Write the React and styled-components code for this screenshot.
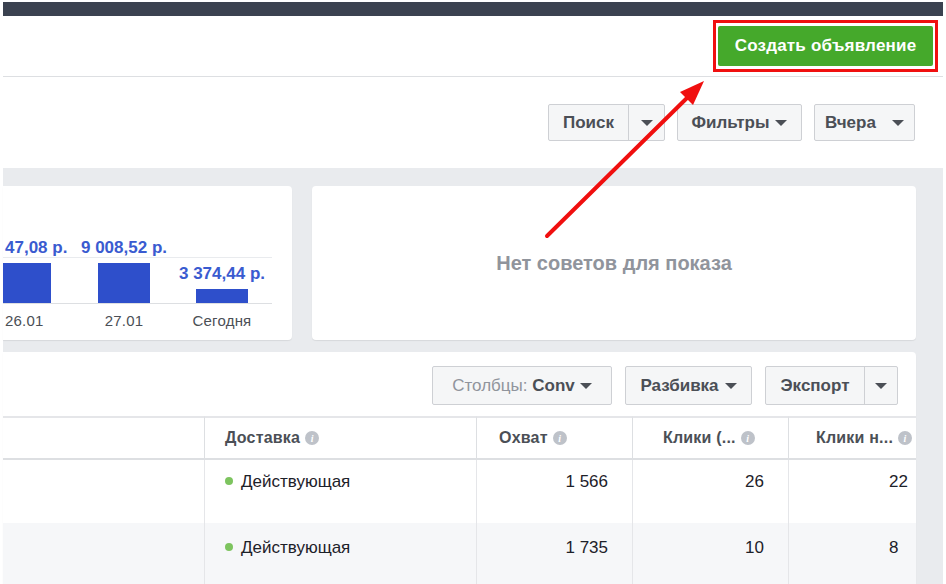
import React from 'react';
import styled, { createGlobalStyle } from 'styled-components';

const Global = createGlobalStyle`
  html, body { margin: 0; padding: 0; background: #fff; }
  body { font-family: "Liberation Sans", Arial, sans-serif; color: #4b4f56; }
`;

const Page = styled.div`
  position: relative;
  width: 946px;
  height: 584px;
  overflow: hidden;
  padding: 2px 3px 0;
  box-sizing: border-box;
  display: flex;
  flex-direction: column;
`;

const TopBar = styled.div`
  height: 14px;
  background: #3b4250;
  flex: none;
`;

const Header = styled.div`
  height: 60px;
  flex: none;
  display: flex;
  justify-content: flex-end;
  align-items: center;
  padding-right: 5px;
  border-bottom: 1px solid #dddfe2;
`;

const RedFrame = styled.div`
  border: 3px solid #f01010;
  padding: 3px 2px;
`;

const CreateButton = styled.button`
  height: 40px;
  width: 215px;
  border: none;
  border-radius: 2px;
  background: #45a92b;
  color: #fff;
  font: bold 17px "Liberation Sans", Arial, sans-serif;
  letter-spacing: 0.2px;
  padding: 0;
`;

const FilterBar = styled.div`
  height: 91px;
  flex: none;
  display: flex;
  justify-content: flex-end;
  align-items: flex-start;
  padding: 27px 28px 0 0;
  box-sizing: border-box;
  gap: 12px;
`;

const Btn = styled.div`
  height: ${p => p.$h || 37}px;
  box-sizing: border-box;
  display: flex;
  align-items: stretch;
  border: 1px solid #ced0d4;
  border-radius: 2px;
  background: #f5f6f7;
  font-size: 17px;
  font-weight: bold;
  color: #4b4f56;
  width: ${p => p.$w}px;
`;

const BtnPart = styled.div`
  flex: 1;
  display: flex;
  align-items: center;
  justify-content: center;
  gap: ${p => p.$gap || 8}px;
`;

const CaretPart = styled.div`
  width: ${p => p.$w || 34}px;
  flex: none;
  border-left: 1px solid #ced0d4;
  display: flex;
  align-items: center;
  justify-content: center;
`;

const Caret = styled.span`
  width: 0;
  height: 0;
  border-left: 6px solid transparent;
  border-right: 6px solid transparent;
  border-top: 6px solid #4b4f56;
`;

const Muted = styled.span`
  font-weight: normal;
  color: #90949c;
`;

const Content = styled.div`
  flex: 1;
  background: #e9ebee;
  padding: 18px 27px 0 0;
  display: flex;
  flex-direction: column;
  gap: 12px;
`;

const CardRow = styled.div`
  display: flex;
  gap: 20px;
  height: 154px;
`;

const Card = styled.div`
  background: #fff;
  border-radius: 0 4px 4px 0;
  box-shadow: 0 1px 1px rgba(0, 0, 0, 0.08);
  overflow: hidden;
`;

const ChartCard = styled(Card)`
  width: 289px;
  padding-top: 71px;
  box-sizing: border-box;
`;

const Plot = styled.div`
  height: 45px;
  margin-right: 20px;
  border-top: 1px solid #e9ebee;
  border-bottom: 1px solid #dddfe2;
  display: flex;
`;

const Column = styled.div`
  width: ${p => (p.$first ? 72 : 98)}px;
  flex: none;
  display: flex;
  flex-direction: column;
  align-items: ${p => (p.$first ? 'flex-start' : 'center')};
  justify-content: flex-end;
`;

const Value = styled.div`
  flex: none;
  white-space: nowrap;
  font-size: 17px;
  font-weight: bold;
  color: #3a5bd0;
  margin: 0 0 5px ${p => (p.$first ? 2 : 0)}px;
`;

const Bar = styled.div`
  flex: none;
  width: ${p => (p.$first ? 48 : 52)}px;
  height: ${p => p.$h}px;
  background: #2e4fcb;
`;

const DateRow = styled.div`
  display: flex;
  margin-top: 8px;
`;

const DateLabel = styled.div`
  width: ${p => (p.$first ? 70 : 98)}px;
  padding-left: ${p => (p.$first ? 2 : 0)}px;
  text-align: ${p => (p.$first ? 'left' : 'center')};
  font-size: 15px;
  letter-spacing: 0.2px;
  color: #4b4f56;
`;

const TipsCard = styled(Card)`
  flex: 1;
  border-radius: 4px;
  display: flex;
  align-items: center;
  justify-content: center;
  font-size: 20px;
  font-weight: bold;
  color: #90949c;
`;

const TableCard = styled(Card)`
  flex: 1;
  border-radius: 0 4px 0 0;
`;

const TableTools = styled.div`
  height: 64px;
  box-sizing: border-box;
  display: flex;
  justify-content: flex-end;
  gap: 13px;
  padding: 14px 18px 0 0;
`;

const Grid = styled.div`
  display: grid;
  grid-template-columns: 201px 272px 156px 156px 1fr;
`;

const Th = styled.div`
  height: 44px;
  box-sizing: border-box;
  border-top: 2px solid #e5e6e9;
  border-bottom: 2px solid #dddfe2;
  border-left: ${p => (p.$first ? 'none' : '1px solid #dddfe2')};
  display: flex;
  align-items: center;
  gap: 5px;
  padding-left: ${p => p.$pad || 20}px;
  font-size: 16px;
  font-weight: bold;
  letter-spacing: 0.2px;
  color: #4b4f56;
  white-space: nowrap;
  overflow: hidden;
`;

const Info = styled.span`
  width: 14px;
  height: 14px;
  border-radius: 50%;
  background: #bec2c9;
  color: #fff;
  font: italic bold 10px "Liberation Serif", serif;
  display: inline-flex;
  align-items: center;
  justify-content: center;
  flex: none;
`;

const Td = styled.div`
  height: ${p => p.$h}px;
  box-sizing: border-box;
  background: ${p => (p.$alt ? '#f6f7f9' : '#fff')};
  border-left: ${p => (p.$first ? 'none' : '1px solid #e5e6e9')};
  padding: ${p => p.$top}px ${p => (p.$right ? 24 : 0)}px 0 ${p => p.$left || 20}px;
  text-align: ${p => (p.$right ? 'right' : 'left')};
  font-size: 17px;
  color: #1d2129;
  white-space: nowrap;
  overflow: hidden;
`;

const Dot = styled.span`
  display: inline-block;
  width: 8px;
  height: 8px;
  border-radius: 50%;
  background: #7dc45f;
  margin-right: 8px;
  vertical-align: 2px;
`;

const Arrow = styled.svg`
  position: absolute;
  left: 0;
  top: 0;
  pointer-events: none;
`;

const rows = [
  { reach: '1 566', clicks: '26', other: '22', h: 63, top: 12 },
  { reach: '1 735', clicks: '10', other: '8', h: 61, top: 15, alt: true },
];

export default function App() {
  return (
    <Page>
      <Global />
      <TopBar />
      <Header>
        <RedFrame>
          <CreateButton>Создать объявление</CreateButton>
        </RedFrame>
      </Header>
      <FilterBar>
        <Btn $w={117}>
          <BtnPart>Поиск</BtnPart>
          <CaretPart $w={35}><Caret /></CaretPart>
        </Btn>
        <Btn $w={125}>
          <BtnPart $gap={6}>Фильтры<Caret /></BtnPart>
        </Btn>
        <Btn $w={101}>
          <BtnPart $gap={16}>Вчера<Caret /></BtnPart>
        </Btn>
      </FilterBar>
      <Content>
        <CardRow>
          <ChartCard>
            <Plot>
              <Column $first><Value $first>47,08 р.</Value><Bar $first $h={40} /></Column>
              <Column><Value>9 008,52 р.</Value><Bar $h={40} /></Column>
              <Column><Value>3 374,44 р.</Value><Bar $h={14} /></Column>
            </Plot>
            <DateRow>
              <DateLabel $first>26.01</DateLabel>
              <DateLabel>27.01</DateLabel>
              <DateLabel>Сегодня</DateLabel>
            </DateRow>
          </ChartCard>
          <TipsCard>Нет советов для показа</TipsCard>
        </CardRow>
        <TableCard>
          <TableTools>
            <Btn $w={180} $h={39}>
              <BtnPart $gap={5}><span><Muted>Столбцы: </Muted>Conv</span><Caret /></BtnPart>
            </Btn>
            <Btn $w={127} $h={39}>
              <BtnPart $gap={6}>Разбивка<Caret /></BtnPart>
            </Btn>
            <Btn $w={133} $h={39}>
              <BtnPart>Экспорт</BtnPart>
              <CaretPart $w={32}><Caret /></CaretPart>
            </Btn>
          </TableTools>
          <Grid>
            <Th $first />
            <Th $pad={20}>Доставка <Info>i</Info></Th>
            <Th $pad={22}>Охват <Info>i</Info></Th>
            <Th $pad={30}>Клики (... <Info>i</Info></Th>
            <Th $pad={27}>Клики н... <Info>i</Info></Th>
            {rows.map((r, i) => (
              <React.Fragment key={i}>
                <Td $first $h={r.h} $top={r.top} $alt={r.alt} />
                <Td $h={r.h} $top={r.top} $alt={r.alt}><Dot />Действующая</Td>
                <Td $right $h={r.h} $top={r.top} $alt={r.alt}>{r.reach}</Td>
                <Td $right $h={r.h} $top={r.top} $alt={r.alt}>{r.clicks}</Td>
                <Td $h={r.h} $top={r.top} $alt={r.alt} $left={100}>{r.other}</Td>
              </React.Fragment>
            ))}
          </Grid>
        </TableCard>
      </Content>
      <Arrow width="946" height="584" viewBox="0 0 946 584">
        <line x1="547" y1="236" x2="690" y2="95" stroke="#f00f0f" strokeWidth="4" strokeLinecap="round" />
        <polygon points="704,81 680,92 693,105" fill="#f00f0f" />
      </Arrow>
    </Page>
  );
}
